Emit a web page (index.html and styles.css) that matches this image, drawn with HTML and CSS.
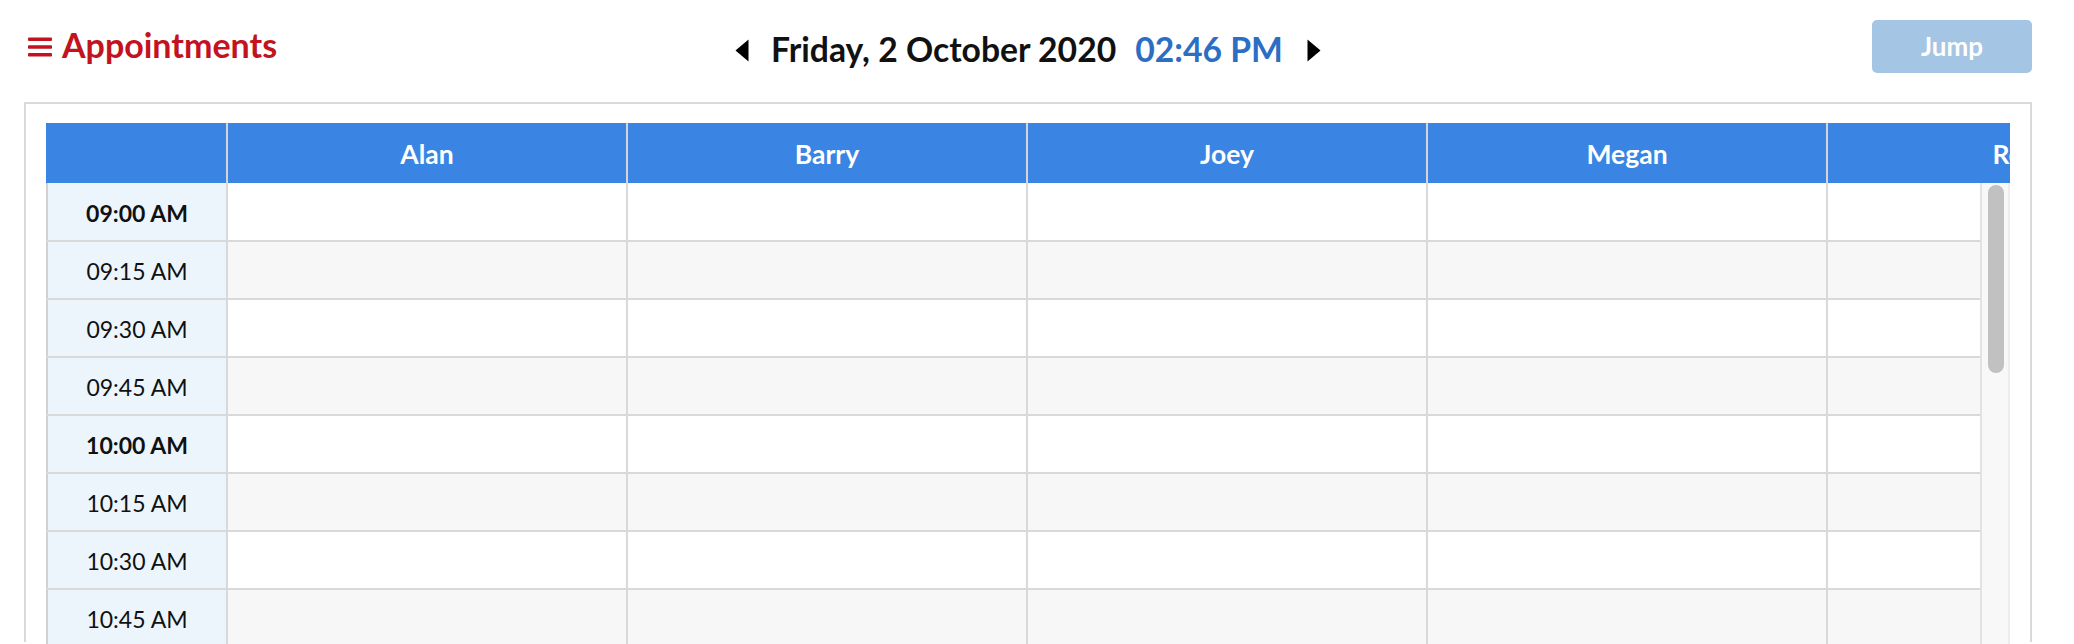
FILE: index.html
```html
<!DOCTYPE html>
<html lang="en">
<head>
<meta charset="utf-8">
<title>Appointments</title>
<link rel="stylesheet" href="styles.css">
</head>
<body>
<div class="page">
  <header class="topbar">
    <div class="title">
      <svg class="bars" width="24" height="20" viewBox="0 0 24 20" aria-hidden="true">
        <rect x="0" y="0.5" width="24" height="3.4" rx="0.8"/>
        <rect x="0" y="8.3" width="24" height="3.4" rx="0.8"/>
        <rect x="0" y="16.1" width="24" height="3.4" rx="0.8"/>
      </svg>
      <span class="title-text">Appointments</span>
    </div>
    <div class="datenav">
      <svg class="caret caret-left" width="14" height="23" viewBox="0 0 14 23" aria-hidden="true"><path d="M13.5 0.5 L13.5 22.5 L0.5 11.5 Z"/></svg>
      <span class="date">Friday, 2 October 2020</span>
      <span class="time">02:46 PM</span>
      <svg class="caret caret-right" width="14" height="23" viewBox="0 0 14 23" aria-hidden="true"><path d="M0.5 0.5 L0.5 22.5 L13.5 11.5 Z"/></svg>
    </div>
    <div class="actions">
      <button class="jump" type="button">Jump</button>
    </div>
  </header>

  <section class="panel">
    <div class="schedule">
      <div class="head">
        <div class="hcell hcell-time"></div>
        <div class="hcell">Alan</div>
        <div class="hcell">Barry</div>
        <div class="hcell">Joey</div>
        <div class="hcell">Megan</div>
        <div class="hcell">Roger</div>
      </div>
      <div class="body">
        <div class="rows">
          <div class="row"><div class="tcell hour">09:00 AM</div><div class="cell"></div><div class="cell"></div><div class="cell"></div><div class="cell"></div><div class="cell"></div></div>
          <div class="row alt"><div class="tcell">09:15 AM</div><div class="cell"></div><div class="cell"></div><div class="cell"></div><div class="cell"></div><div class="cell"></div></div>
          <div class="row"><div class="tcell">09:30 AM</div><div class="cell"></div><div class="cell"></div><div class="cell"></div><div class="cell"></div><div class="cell"></div></div>
          <div class="row alt"><div class="tcell">09:45 AM</div><div class="cell"></div><div class="cell"></div><div class="cell"></div><div class="cell"></div><div class="cell"></div></div>
          <div class="row"><div class="tcell hour">10:00 AM</div><div class="cell"></div><div class="cell"></div><div class="cell"></div><div class="cell"></div><div class="cell"></div></div>
          <div class="row alt"><div class="tcell">10:15 AM</div><div class="cell"></div><div class="cell"></div><div class="cell"></div><div class="cell"></div><div class="cell"></div></div>
          <div class="row"><div class="tcell">10:30 AM</div><div class="cell"></div><div class="cell"></div><div class="cell"></div><div class="cell"></div><div class="cell"></div></div>
          <div class="row alt"><div class="tcell">10:45 AM</div><div class="cell"></div><div class="cell"></div><div class="cell"></div><div class="cell"></div><div class="cell"></div></div>
        </div>
        <div class="scrollbar"><div class="thumb"></div></div>
      </div>
    </div>
  </section>
</div>
</body>
</html>
```

FILE: styles.css
```css
* { box-sizing: border-box; }

html, body {
  margin: 0;
  padding: 0;
  background: #ffffff;
  font-family: Lato, "Open Sans", "Liberation Sans", sans-serif;
  color: #111111;
}

body { height: 644px; overflow: hidden; }

.page {
  padding: 20px 42px 0 24px;
}

/* ---------- top bar ---------- */
.topbar {
  display: grid;
  grid-template-columns: 1fr auto 1fr;
  align-items: start;
  height: 53px;
}

.title {
  display: flex;
  align-items: center;
  gap: 10px;
  padding-top: 5px;
  padding-left: 4px;
  color: #c2131f;
}

.bars { fill: #c2131f; display: block; margin-top: 3px; }

.title-text {
  font-size: 34px;
  font-weight: 700;
  line-height: 40px;
}

.datenav {
  display: flex;
  align-items: center;
  padding-top: 9px;
  font-size: 33.7px;
  font-weight: 700;
  line-height: 40px;
}

.caret { display: block; fill: #000000; margin-top: 2px; }
.caret-left { margin-right: 22px; }
.caret-right { margin-left: 24px; }

.date { color: #111111; }
.time { color: #2b6ec4; margin-left: 19px; }

.actions {
  display: flex;
  justify-content: flex-end;
}

.jump {
  width: 160px;
  height: 53px;
  border: 0;
  border-radius: 5px;
  background: #a4c5e4;
  color: #ffffff;
  font-family: Lato, "Open Sans", "Liberation Sans", sans-serif;
  font-size: 26px;
  font-weight: 700;
  line-height: 31px;
  padding: 0;
}

/* ---------- panel ---------- */
.panel {
  margin-top: 29px;
  border: 2px solid #d9d9d9;
  border-bottom: 0;
  padding: 19px 20px 0 20px;
  height: 540px;
}

.schedule {
  width: 100%;
}

.head {
  display: flex;
  height: 60px;
  background: #3a84e4;
  overflow: hidden;
}

.hcell {
  flex: 0 0 400px;
  border-right: 2px solid #d4d4d4;
  color: #ffffff;
  font-size: 26.5px;
  font-weight: 700;
  display: flex;
  align-items: center;
  justify-content: center;
  padding-top: 2px;
}

.hcell-time { flex-basis: 182px; }

.body {
  display: flex;
  align-items: stretch;
}

.rows {
  flex: 1 1 auto;
  min-width: 0;
  overflow: hidden;
}

.row {
  display: flex;
  height: 58px;
  border-bottom: 2px solid #d9d9d9;
  background: #ffffff;
}

.row:first-child { height: 59px; }

.row.alt { background: #f7f7f7; }

.tcell {
  flex: 0 0 182px;
  background: #edf5fc;
  border-left: 2px solid #d2d2d2;
  border-right: 2px solid #d9d9d9;
  display: flex;
  align-items: center;
  justify-content: center;
  font-size: 23px;
  font-weight: 400;
  color: #111111;
  padding-top: 2px;
}

.tcell.hour { font-weight: 700; }

.cell {
  flex: 0 0 400px;
  border-right: 2px solid #d9d9d9;
}

.scrollbar {
  flex: 0 0 30px;
  background: #f8f8f8;
  border-left: 2px solid #e2e2e2;
  border-right: 2px solid #ededed;
  padding: 2px 4px 0 6px;
}

.thumb {
  width: 16px;
  height: 188px;
  border-radius: 8px;
  background: #c1c1c1;
}
```
